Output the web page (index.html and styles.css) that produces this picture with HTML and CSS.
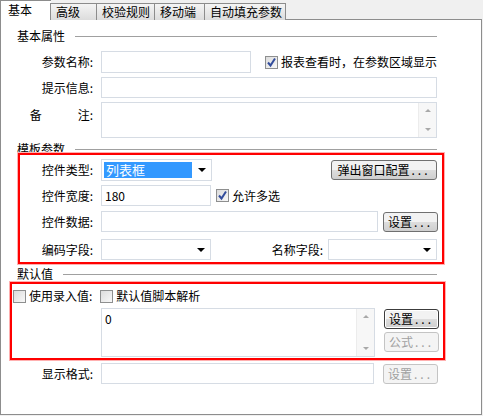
FILE: index.html
```html
<!DOCTYPE html>
<html>
<head>
	<title>参数设置</title>
	<link rel="stylesheet" href="styles.css">
</head>
<body>

<div class="tabs">
	<div class="tab current">基本</div>
	<div class="tab w46">高级</div>
	<div class="tab w58">校验规则</div>
	<div class="tab w50">移动端</div>
	<div class="tab w81">自动填充参数</div>
</div>

<div class="panel">
	<div class="content">
		<div class="section first"><span>基本属性</span><i></i></div>

		<div class="row tall-first">
			<label class="label">参数名称:</label>
			<div class="input w150"></div>
			<span class="check on gap14"></span><span class="pad3">报表查看时，在参数区域显示</span>
		</div>
		<div class="row">
			<label class="label">提示信息:</label>
			<div class="input grow"></div>
		</div>
		<div class="row memo">
			<label class="label spaced">备<b></b>注:</label>
			<div class="input grow area">
				<div class="text"></div>
				<div class="scroll"><span class="up"></span><span class="down"></span></div>
			</div>
		</div>

		<div class="section"><span>模板参数</span><i></i></div>

		<div class="row r1">
			<label class="label">控件类型:</label>
			<div class="input select w111">
				<span class="picked">列表框</span>
				<span class="arrow"></span>
			</div>
			<span class="spacer"></span>
			<button class="btn w106">弹出窗口配置<span class="dots">...</span></button>
		</div>
		<div class="row r2">
			<label class="label">控件宽度:</label>
			<div class="input w110 value">180</div>
			<span class="check on gap5"></span><span class="pad3">允许多选</span>
		</div>
		<div class="row r3">
			<label class="label">控件数据:</label>
			<div class="input w277"></div>
			<button class="btn w55 gap5">设置<span class="dots">...</span></button>
		</div>
		<div class="row r4">
			<label class="label">编码字段:</label>
			<div class="input select w110"><span></span><span class="arrow"></span></div>
			<span class="spacer"></span>
			<label>名称字段:</label>
			<div class="input select w109 gap5"><span></span><span class="arrow"></span></div>
		</div>

		<div class="section s3"><span>默认值</span><i></i></div>

		<div class="row checks">
			<span class="check"></span><span class="pad3">使用录入值:</span>
			<span class="check gap8"></span><span class="pad3">默认值脚本解析</span>
		</div>
		<div class="row script">
			<div class="input area w274">
				<div class="text value">0</div>
				<div class="scroll"><span class="up"></span><span class="down"></span></div>
			</div>
			<div class="btns">
				<button class="btn w55 focus">设置<span class="dots">...</span></button>
				<button class="btn w55" disabled>公式<span class="dots">...</span></button>
			</div>
		</div>
		<div class="row r5">
			<label class="label">显示格式:</label>
			<div class="input w273"></div>
			<button class="btn w55 gap9" disabled>设置<span class="dots">...</span></button>
		</div>
	</div>

	<div class="mark one"></div>
	<div class="mark two"></div>
</div>

</body>
</html>
```

FILE: styles.css
```css
body {
	margin: 0;
	background: #f0f0f0;
	font-family: "Noto Sans CJK SC", "Liberation Sans", sans-serif;
	font-size: 12px;
	line-height: 14px;
	color: #000;
}

.tabs {
	display: flex;
	align-items: flex-end;
	height: 20px;
}

.tab {
	position: relative;
	z-index: 1;
	box-sizing: border-box;
	height: 17px;
	padding: 1px 0 0 5px;
	border: 1px solid #8c8c8c;
	border-bottom: none;
	background: linear-gradient(#f4f4f4, #dcdcdc);
	margin-left: -1px;
}

.tab.current {
	height: 21px;
	width: 51px;
	margin-left: 0;
	margin-bottom: -1px;
	padding: 2px 0 0 7px;
	background: #fff;
	border-right: none;
}

.w46 { width: 47px; }
.w58 { width: 59px; }
.w50 { width: 51px; }
.w81 { width: 82px; }

.panel {
	position: relative;
	box-sizing: border-box;
	width: 482px;
	height: 396px;
	margin-top: -1px;
	border: 1px solid #8d8d8d;
	background: #fff;
}

.content {
	width: 436px;
	padding-top: 9px;
}

.section {
	display: flex;
	align-items: center;
	height: 14px;
	padding-left: 16px;
	margin-top: 4px;
}

.section.first { margin-top: 0; }
.section.s3 { margin-top: 7px; }

.section i {
	flex: 1;
	margin-left: 10px;
	border-top: 1px solid #a0a0a0;
}

.row {
	display: flex;
	align-items: center;
	height: 21px;
	margin-top: 4px;
	white-space: nowrap;
}

.row.tall-first { margin-top: 8px; height: 22px; }
.row.memo { height: 36px; align-items: flex-start; }
.row.memo .label { padding-top: 6px; }
.row.r1 { margin-top: 3px; height: 22px; }
.row.r2 { margin-top: 4px; }
.row.r3 { margin-top: 5px; }
.row.r4 { margin-top: 7px; }
.row.checks { margin-top: 7px; height: 16px; padding-left: 12px; }
.row.script { height: 49px; align-items: flex-start; padding-left: 100px; }
.row.r5 { margin-top: 6px; }

.label {
	width: 92px;
	margin-right: 8px;
	text-align: right;
	flex: none;
}

.label.spaced {
	display: flex;
	justify-content: flex-end;
}

.label.spaced b {
	width: 36px;
}

.input {
	box-sizing: border-box;
	height: 100%;
	border: 1px solid #d6dce4;
	background: #fff;
	flex: none;
}

.input.grow { flex: 1; }

.input.value, .text.value {
	padding: 3px 0 0 3px;
}

.w150 { width: 150px; }
.w111 { width: 111px; }
.w110 { width: 110px; }
.w109 { width: 109px; }
.w277 { width: 277px; }
.w274 { width: 274px; }
.w273 { width: 273px; }
.w106 { width: 106px; }
.w55 { width: 55px; }

.gap5 { margin-left: 5px; }
.gap8 { margin-left: 8px; }
.gap9 { margin-left: 9px; }
.gap14 { margin-left: 14px; }
.pad3 { margin-left: 3px; }

.spacer { flex: 1; }

.select {
	display: flex;
	align-items: center;
	justify-content: space-between;
	padding: 2px 5px 2px 2px;
}

.picked {
	display: block;
	width: 86px;
	height: 16px;
	line-height: 16px;
	padding-left: 2px;
	background: #3399ff;
	color: #fff;
	font-size: 13px;
}

.arrow {
	width: 0;
	height: 0;
	border-left: 4px solid transparent;
	border-right: 4px solid transparent;
	border-top: 4px solid #000;
}

.area {
	display: flex;
}

.area .text { flex: 1; }

.scroll {
	width: 17px;
	display: flex;
	flex-direction: column;
	justify-content: space-between;
	align-items: center;
	padding: 6px 0;
	background: #f7f7f7;
	border-left: 1px solid #ececec;
}

.up, .down {
	width: 0;
	height: 0;
	border-left: 3px solid transparent;
	border-right: 3px solid transparent;
}

.up { border-bottom: 3px solid #a8a8a8; }
.down { border-top: 3px solid #a8a8a8; }

.check {
	box-sizing: border-box;
	width: 13px;
	height: 13px;
	flex: none;
	border: 1px solid #8e8f8f;
	background: linear-gradient(135deg, #dcdcdc, #f8f8f8);
}

.check.on {
	background:
		url("data:image/svg+xml,%3Csvg xmlns='http://www.w3.org/2000/svg' width='11' height='11'%3E%3Cpath d='M2 5.5 L4.5 8.5 L9 1.5' fill='none' stroke='%23334d9c' stroke-width='2'/%3E%3C/svg%3E") no-repeat,
		linear-gradient(135deg, #dcdcdc, #f8f8f8);
}

.btn {
	box-sizing: border-box;
	height: 20px;
	padding: 0;
	border: 1px solid #707070;
	border-radius: 3px;
	background: linear-gradient(#f2f2f2 50%, #dddddd 50%, #cfcfcf);
	font: inherit;
	color: #000;
	flex: none;
}

.btn.focus {
	border-color: #3c3c3c;
	box-shadow: inset 0 0 0 1px #ffffff;
}

.btn:disabled {
	border-color: #c4c4c4;
	background: #f4f4f4;
	color: #a0a0a0;
}

.dots {
	letter-spacing: 3px;
	margin-left: 2px;
}

.btns {
	display: flex;
	flex-direction: column;
	gap: 3px;
	margin-left: 9px;
	padding-top: 1px;
}

.mark {
	position: absolute;
	box-sizing: border-box;
	border: 2px solid #ff0000;
	box-shadow: 0 0 0 1px #ffb0b0;
}

.mark.one {
	left: 17px;
	top: 133px;
	width: 426px;
	height: 111px;
}

.mark.two {
	left: 9px;
	top: 262px;
	width: 435px;
	height: 78px;
}
```
